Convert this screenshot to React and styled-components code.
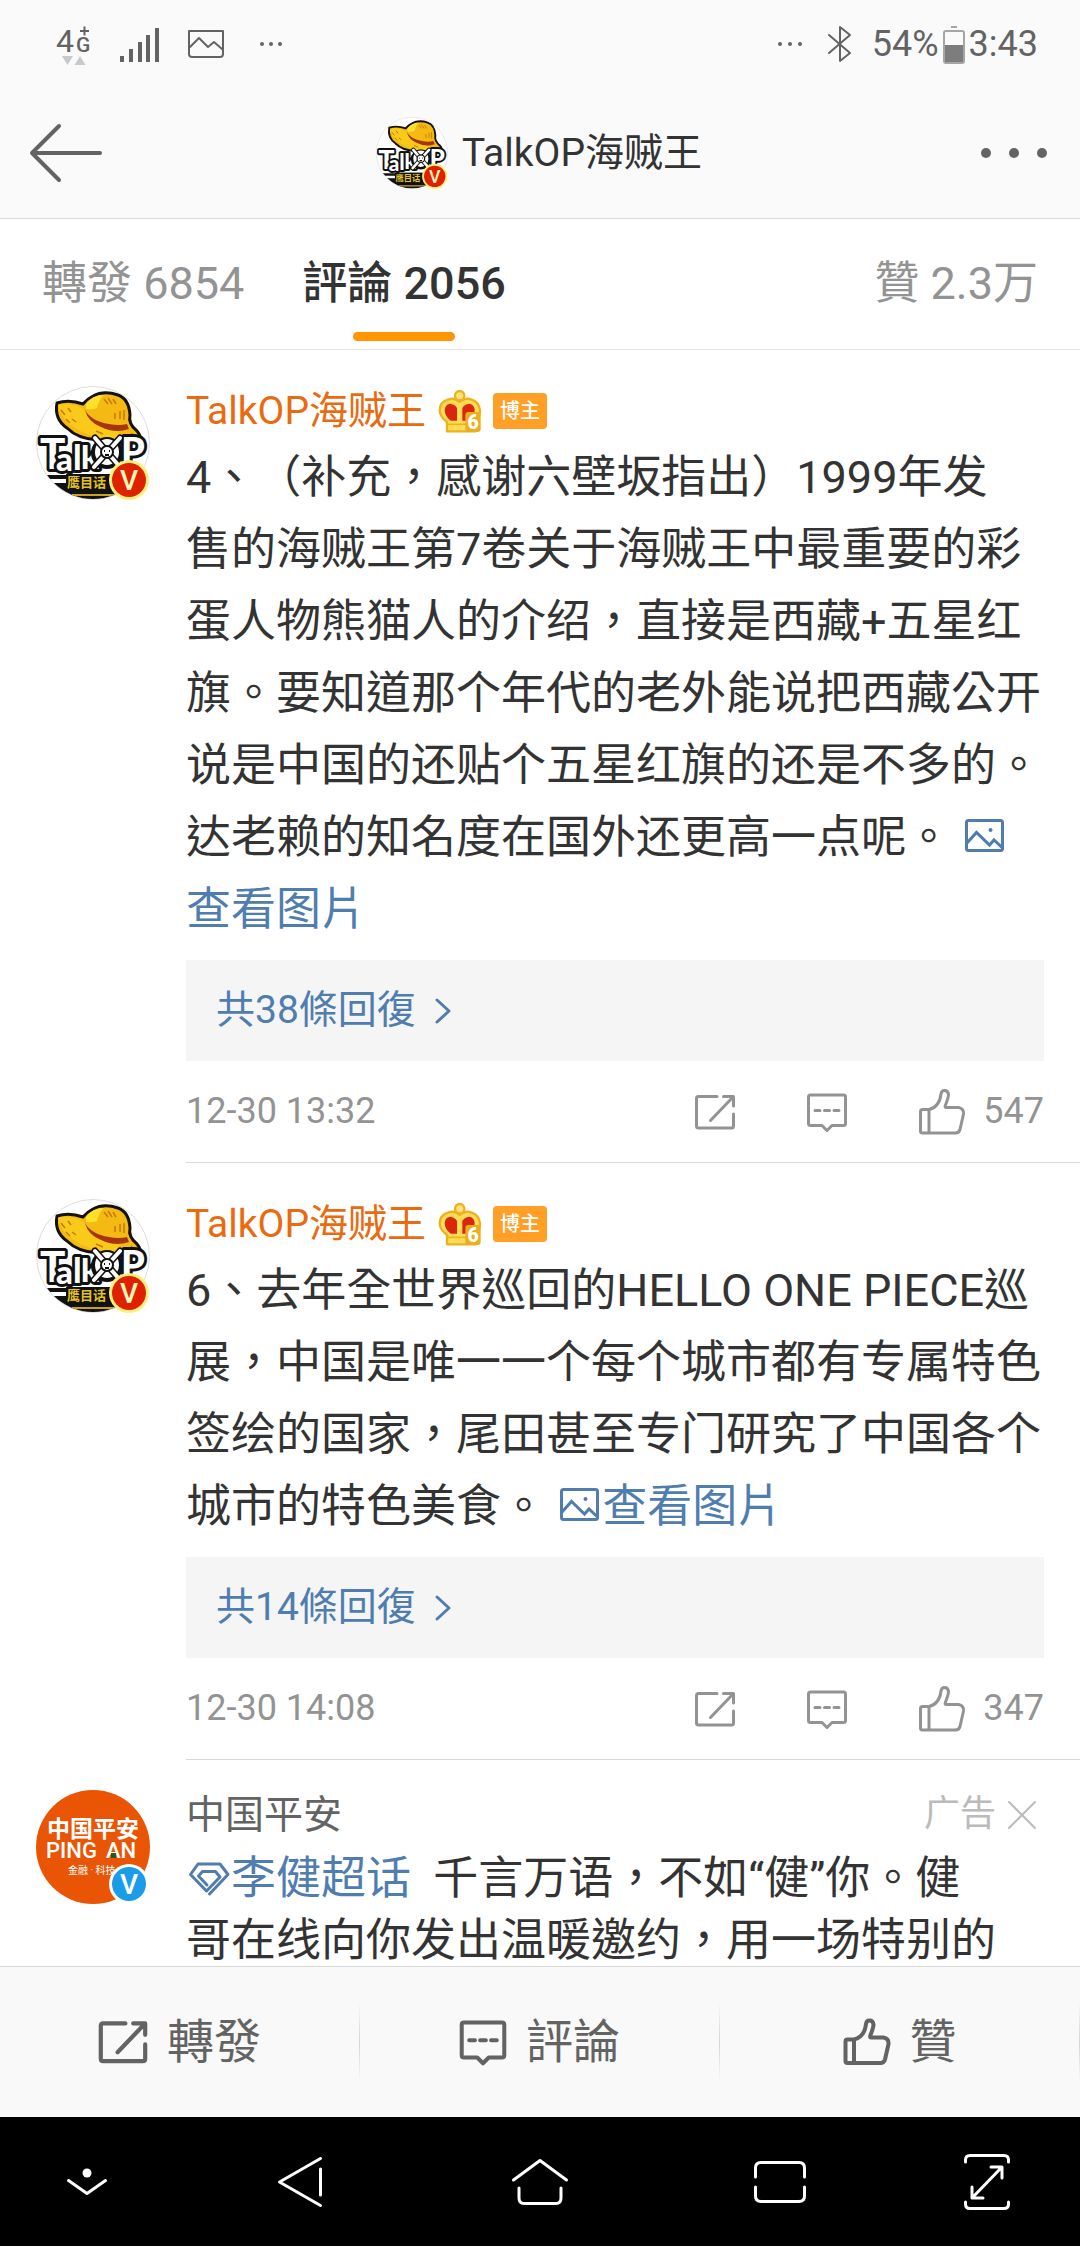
import React from "react";
import styled, { createGlobalStyle } from "styled-components";

const COLORS = {
  bar: "#fafafa",
  line: "#d9d9d9",
  text: "#333333",
  muted: "#939393",
  dark: "#636363",
  link: "#507daf",
  name: "#e86b0f",
  orange: "#ff9500",
};

const SIZES = {
  sm: "36px",
  md: "39px",
  lg: "45px",
};

const GlobalStyle = createGlobalStyle`
  * {
    box-sizing: border-box;
  }

  body {
    margin: 0;
    background: white;
    color: ${COLORS.text};
    font-family: Roboto, "Noto Sans CJK TC", sans-serif;
    line-height: 1.2;
    text-spacing-trim: space-all;
  }

  button {
    margin: 0;
    padding: 0;
    border: 0;
    background: none;
    color: inherit;
    font: inherit;
    cursor: pointer;
  }

  svg {
    display: block;
    flex: none;
    overflow: visible;
  }
`;

const Screen = styled.div`
  display: flex;
  flex-direction: column;
  height: 100vh;
`;

const StatusBar = styled.div`
  display: flex;
  justify-content: space-between;
  align-items: center;
  height: 88px;
  padding: 0 42px 0 56px;
  background: ${COLORS.bar};
  color: ${COLORS.dark};
  font-size: ${SIZES.sm};
`;

const StatusGroup = styled.div`
  display: flex;
  align-items: center;
  gap: ${(props) => props.$gap};
`;

const Power = styled.div`
  display: flex;
  align-items: center;
  gap: 4px;
  padding-top: 2px;
`;

const Header = styled.header`
  display: grid;
  grid-template-columns: 1fr auto 1fr;
  align-items: center;
  height: 131px;
  padding: 0 32px 0 30px;
  background: ${COLORS.bar};
  border-bottom: 1px solid ${COLORS.line};
  color: ${COLORS.dark};
`;

const Title = styled.h1`
  display: flex;
  align-items: center;
  gap: 14px;
  margin: 0;
  color: ${COLORS.text};
  font-size: ${SIZES.md};
  font-weight: 400;
`;

const MoreButton = styled.button`
  justify-self: end;
`;

const Tabs = styled.nav`
  display: flex;
  gap: 58px;
  height: 131px;
  padding: 0 42px;
  border-bottom: 1px solid #e6e6e6;
`;

const Tab = styled.button`
  display: flex;
  flex-direction: column;
  justify-content: center;
  align-items: center;
  position: relative;
  color: ${(props) => (props.$active ? COLORS.text : COLORS.muted)};
  font-size: ${SIZES.lg};
  font-weight: ${(props) => (props.$active ? 500 : 400)};

  &:last-child {
    margin-left: auto;
  }

  &::after {
    content: "";
    display: ${(props) => (props.$active ? "block" : "none")};
    position: absolute;
    bottom: 8px;
    width: 102px;
    height: 9px;
    border-radius: 5px;
    background: ${COLORS.orange};
  }
`;

const Feed = styled.main`
  flex: 1;
  min-height: 0;
  overflow-y: auto;
  scrollbar-width: none;
`;

const Item = styled.article`
  display: flex;
  gap: 36px;
  padding-left: 36px;
`;

const ItemAvatar = styled.div`
  flex: none;
  padding-top: ${(props) => props.$top};
`;

const ItemContent = styled.div`
  flex: 1;
  min-width: 0;
  padding: ${(props) => props.$top} 36px 0 0;
  border-bottom: 1px solid ${COLORS.line};
`;

const NameRow = styled.div`
  display: flex;
  align-items: center;
  height: 50px;
  gap: 12px;
`;

const Name = styled.a`
  color: ${(props) => (props.$plain ? COLORS.dark : COLORS.name)};
  font-size: ${SIZES.md};
  text-decoration: none;
`;

const OwnerTag = styled.span`
  height: 36px;
  padding: 0 7px;
  border-radius: 4px;
  background: #ff9f26;
  color: white;
  font-size: 20px;
  font-weight: 500;
  line-height: 36px;
`;

const Body = styled.p`
  margin: 6px 0 14px;
  font-size: ${SIZES.lg};
  line-height: 72px;
  white-space: pre-line;
`;

const AdBody = styled.p`
  margin: 8px 0 30px;
  padding-right: 44px;
  font-size: ${SIZES.lg};
  line-height: 62px;
`;

const TextLink = styled.a`
  color: ${COLORS.link};
  text-decoration: none;

  svg {
    display: inline-block;
    vertical-align: -2px;
  }
`;

const Replies = styled.button`
  display: flex;
  align-items: center;
  gap: 18px;
  width: 100%;
  height: 101px;
  padding: 0 30px;
  background: #f5f5f5;
  color: ${COLORS.link};
  font-size: ${SIZES.md};
`;

const Meta = styled.footer`
  display: flex;
  align-items: center;
  height: 101px;
  color: ${COLORS.muted};
  font-size: ${SIZES.sm};
`;

const Actions = styled.div`
  display: flex;
  align-items: center;
  gap: 72px;
  margin-left: auto;
`;

const Action = styled.button`
  display: flex;
  align-items: center;
  gap: 18px;
`;

const AdLabel = styled.div`
  display: flex;
  align-items: center;
  gap: 12px;
  margin-left: auto;
  padding-right: 8px;
  color: #bbbbbb;
  font-size: ${SIZES.sm};
`;

const Toolbar = styled.div`
  display: flex;
  flex: none;
  height: 151px;
  background: #f9f9f9;
  border-top: 1px solid ${COLORS.line};
`;

const ToolbarButton = styled.button`
  display: flex;
  flex: 1;
  justify-content: center;
  align-items: center;
  gap: 20px;
  color: ${COLORS.dark};
  font-size: 47px;
  background: linear-gradient(transparent, #d4d4d4, transparent) right center /
    1px 80px no-repeat;
`;

const SystemNav = styled.nav`
  display: grid;
  grid-template-columns: 29fr 42fr 38fr 42fr 27fr;
  flex: none;
  height: 129px;
  padding-right: 12px;
  background: black;
  color: white;
`;

const NavButton = styled.button`
  display: flex;
  justify-content: center;
  align-items: center;
`;

const stroke = (width) => ({
  fill: "none",
  stroke: "currentColor",
  strokeWidth: width,
  strokeLinecap: "round",
  strokeLinejoin: "round",
});

const ShareIcon = ({ size = 40, weight = 3 }) => (
  <svg width={size} height={size} viewBox="0 0 40 40" {...stroke(weight)}>
    <path d="M22 4.5H3.500Q1.500 4.500 1.500 6.500V34Q1.500 36 3.500 36H36.500Q38.500 36 38.500 34V22" />
    <path d="M28.500 4.500H38.500V14M38 5L15.500 28.500" />
  </svg>
);

const CommentIcon = ({ size = 40, weight = 3 }) => (
  <svg width={size} height={size} viewBox="0 0 40 40" {...stroke(weight)}>
    <path d="M3.500 3H36.500Q38.500 3 38.500 5V31.500Q38.500 33.500 36.500 33.500H25L20 38.500L15 33.500H3.500Q1.500 33.500 1.500 31.500V5Q1.500 3 3.500 3Z" />
    <path d="M8 18.500H13M17.500 18.500H22.500M27 18.500H32" />
  </svg>
);

const LikeIcon = ({ size = 46, weight = 3 }) => (
  <svg width={size} height={size} viewBox="0 0 46 46" {...stroke(weight)}>
    <path d="M10 20.500H3.500Q1.500 20.500 1.500 22.500V42Q1.500 44 3.500 44H36.500Q40 44 41 40.500L44.500 25Q45 19.500 39.500 18.500H27Q25.500 18.500 26.500 16Q29.500 8.500 29.500 5.500Q29 1.500 25.500 1.500Q22.500 1.500 22 5Q20.500 18 10 20.500V44" />
  </svg>
);

const PictureIcon = () => (
  <svg width="45" height="39" viewBox="0 0 45 39" {...stroke(3)}>
    <rect x="4.500" y="4.500" width="36" height="30" rx="2" />
    <path
      d="M5 27L14.500 16.500L27.500 29L32 24L40 31.500"
      strokeLinecap="butt"
      strokeLinejoin="miter"
    />
    <circle cx="28.500" cy="14" r="2" fill="currentColor" stroke="none" />
  </svg>
);

const TopicIcon = () => (
  <svg width="45" height="36" viewBox="0 0 45 36" {...stroke(3)}>
    <path d="M23.500 34L42 14.500L34 4H12L4.500 14.500L20.500 31L34 17L29.500 11.500H16.500L12.500 16L21 25" />
  </svg>
);

const ChevronIcon = () => (
  <svg width="18" height="26" viewBox="0 0 18 26" {...stroke(3)}>
    <path d="M3 2L15 13L3 24" />
  </svg>
);

const CloseIcon = () => (
  <svg width="28" height="28" viewBox="0 0 28 28" {...stroke(2)}>
    <path d="M1 1L27 27M27 1L1 27" />
  </svg>
);

const DotsIcon = ({ size, step, r }) => (
  <svg width={size} height={r * 2} fill="currentColor">
    <circle cx={r} cy={r} r={r} />
    <circle cx={r + step} cy={r} r={r} />
    <circle cx={r + step * 2} cy={r} r={r} />
  </svg>
);

const BackIcon = () => (
  <svg width="74" height="60" viewBox="0 0 74 60" {...stroke(4)}>
    <path d="M70 30H2M29 3L2 30L29 57" />
  </svg>
);

const NetworkIcon = () => (
  <svg width="36" height="44" viewBox="0 0 36 44" fill="currentColor">
    <text x="0" y="30" fontSize="32">
      4
    </text>
    <text x="20" y="30" fontSize="21" fontWeight="500">
      G
    </text>
    <path d="M24 9H33M28.500 4.500V13.500" stroke="currentColor" strokeWidth="2" />
    <path d="M6 34H17L11.500 43ZM18.500 43H29.500L24 34Z" fill="#c9c9c9" />
  </svg>
);

const SignalIcon = () => (
  <svg width="40" height="36" viewBox="0 0 40 36" fill="currentColor">
    <rect x="0" y="30" width="4" height="6" />
    <rect x="9" y="23" width="4" height="13" />
    <rect x="18" y="16" width="4" height="20" />
    <rect x="26" y="9" width="4" height="27" />
    <rect x="35" y="2" width="4" height="34" />
  </svg>
);

const GalleryIcon = () => (
  <svg width="36" height="28" viewBox="0 0 36 28" {...stroke(2)}>
    <path d="M1 1H35V24Q35 27 32 27H4Q1 27 1 24Z" />
    <path d="M2 17L11 8L20 17L26 12L34 19" />
  </svg>
);

const BluetoothIcon = () => (
  <svg width="24" height="38" viewBox="0 0 24 38" {...stroke(2)}>
    <path d="M1 10L22 28L12 36V2L22 10L1 28" />
  </svg>
);

const BatteryIcon = () => (
  <svg width="22" height="38" viewBox="0 0 22 38">
    <rect x="8" y="0" width="6" height="2" fill="#a5a5a5" />
    <rect
      x="1"
      y="5"
      width="20"
      height="32"
      rx="2"
      fill="none"
      stroke="#a5a5a5"
      strokeWidth="2"
    />
    <rect x="2" y="19" width="18" height="17" fill="#7d7d7d" />
  </svg>
);

const CrownIcon = () => (
  <svg width="43" height="43" viewBox="0 0 129 129">
    <g stroke="#ecb21f" strokeWidth="7" strokeLinejoin="round">
      <path
        d="M65 36Q50 22 32 28Q5 35 5 62Q7 82 27 96V124H112V96Q126 82 126 62Q124 36 99 28Q80 22 65 36Z"
        fill="#ffdc55"
      />
      <circle cx="65" cy="17" r="14" fill="#ffe27a" />
    </g>
    <path
      d="M38 92Q20 78 20 60Q21 44 36 41Q50 42 57 54V92ZM92 92Q110 78 110 60Q109 44 94 41Q80 42 73 54V92Z"
      fill="#d9260f"
    />
    <path d="M28 103H100" stroke="#ecb21f" strokeWidth="5" />
    <rect x="82" y="66" width="46" height="60" rx="9" fill="#ecae1c" />
    <text
      x="105"
      y="117"
      fontSize="58"
      fontWeight="900"
      textAnchor="middle"
      fill="white"
    >
      6
    </text>
  </svg>
);

const VerifiedMark = ({ ring, fill, color }) => (
  <g>
    <circle cx="93" cy="94" r="20" fill={ring} />
    <circle cx="93" cy="94" r="17" fill={fill} />
    <text
      x="93"
      y="104"
      fontSize="28"
      fontWeight="500"
      textAnchor="middle"
      fill={color}
    >
      V
    </text>
  </g>
);

const HatAvatar = ({ size, id }) => (
  <svg width={size} height={size} viewBox="0 0 114 114">
    <clipPath id={id}>
      <circle cx="57" cy="57" r="56" />
    </clipPath>
    <circle cx="57" cy="57" r="56.500" fill="white" stroke="#dddddd" />
    <g clipPath={`url(#${id})`}>
      <path d="M10 89H40V93H14ZM16 97H104V120H16Z" fill="#111111" />
      <rect x="30" y="88" width="70" height="18" fill="#111111" />
      <path d="M36 109H90" stroke="#c9a21d" strokeWidth="2" />
      <path
        d="M21 17Q18 33 31 42Q42 53 62 54Q76 54 87 58L104 56Q106 51 101 45Q92 38 94 29Q93 13 82 9Q68 4 57 10Q51 13 47 18Q33 13 21 17Z"
        fill="#f5b914"
        stroke="#15110b"
        strokeWidth="3"
        strokeLinejoin="round"
      />
      <path d="M50 18Q56 9 68 9Q63 13 61 22Q56 24 50 23Z" fill="#ffe02b" />
      <path
        d="M22 19Q34 16 46 22Q56 36 74 41Q84 45 88 54Q58 54 39 42Q25 34 22 19Z"
        fill="#f9ca19"
      />
      <path
        d="M49 24Q55 35 73 38Q83 40 91 38L93 43Q79 48 65 41Q52 36 49 24Z"
        fill="#a8360c"
      />
      <path
        d="M25 24L29 29M32 22L35 26M36 33L40 36M30 33L34 37M68 13L72 18M72 12L76 18M77 13L80 18M79 27V33M84 25V33M88 24V34M60 45L67 48M95 47L99 51"
        stroke="#c87a0d"
        strokeWidth="1.500"
      />
      <g
        fill="white"
        stroke="#111111"
        strokeWidth="6"
        strokeLinejoin="round"
        paintOrder="stroke"
        fontFamily="Lato, sans-serif"
        fontWeight="900"
      >
        <text x="4" y="83" fontSize="42">
          T
        </text>
        <text x="20" y="85" fontSize="33">
          a
        </text>
        <text x="37" y="84" fontSize="35">
          l
        </text>
        <text x="45" y="83" fontSize="33">
          k
        </text>
        <text x="85" y="79" fontSize="38">
          P
        </text>
      </g>
      <circle cx="71" cy="67" r="16" fill="#111111" />
      <ellipse cx="71" cy="66" rx="12" ry="13" fill="white" />
      <path
        d="M59 52L84 81M84 52L58 81"
        stroke="#111111"
        strokeWidth="7"
        strokeLinecap="round"
      />
      <path
        d="M59 52L84 81M84 52L58 81"
        stroke="white"
        strokeWidth="4"
        strokeLinecap="round"
      />
      <circle cx="71" cy="66" r="6" fill="white" stroke="#111111" strokeWidth="2" />
      <path d="M68 65H69M73 65H74M69 69H73" stroke="#111111" strokeWidth="2" />
      <text x="31" y="101" fontSize="13" fontWeight="700" fill="#e4c21f">
        鹰目话
      </text>
    </g>
    <VerifiedMark ring="#fdf07c" fill="#df2100" color="#fff7b8" />
  </svg>
);

const BankAvatar = () => (
  <svg width="114" height="114" viewBox="0 0 114 114">
    <circle cx="57" cy="57" r="57" fill="#e95504" />
    <g fill="white">
      <text x="11" y="47" fontSize="23" fontWeight="700">
        中国平安
      </text>
      <text x="10" y="68" fontSize="22" fontWeight="500">
        PING
      </text>
      <text x="70" y="68" fontSize="22" fontWeight="500">
        AN
      </text>
      <text x="32" y="84" fontSize="10">
        金融 · 科技
      </text>
    </g>
    <rect x="75" y="63" width="5" height="5" fill="#1d5c22" />
    <VerifiedMark ring="white" fill="#1b9ce9" color="white" />
  </svg>
);

const comments = [
  {
    id: "c4",
    text: "4、（补充，感谢六壁坂指出）1999年发\n售的海贼王第7卷关于海贼王中最重要的彩蛋人物熊猫人的介绍，直接是西藏+五星红旗。要知道那个年代的老外能说把西藏公开说是中国的还贴个五星红旗的还是不多的。达老赖的知名度在国外还更高一点呢。 ",
    replies: 38,
    time: "12-30 13:32",
    likes: 547,
  },
  {
    id: "c6",
    text: "6、去年全世界巡回的HELLO ONE PIECE巡展，中国是唯一一个每个城市都有专属特色签绘的国家，尾田甚至专门研究了中国各个城市的特色美食。 ",
    replies: 14,
    time: "12-30 14:08",
    likes: 347,
  },
];

const Comment = ({ id, text, replies, time, likes }) => (
  <Item>
    <ItemAvatar $top="36px">
      <HatAvatar size={114} id={id} />
    </ItemAvatar>
    <ItemContent $top="36px">
      <NameRow>
        <Name href="#user">TalkOP海贼王</Name>
        <CrownIcon />
        <OwnerTag>博主</OwnerTag>
      </NameRow>
      <Body>
        {text}
        <TextLink href="#picture">
          <PictureIcon />
          查看图片
        </TextLink>
      </Body>
      <Replies>
        共{replies}條回復
        <ChevronIcon />
      </Replies>
      <Meta>
        <time>{time}</time>
        <Actions>
          <Action aria-label="轉發">
            <ShareIcon />
          </Action>
          <Action aria-label="評論">
            <CommentIcon />
          </Action>
          <Action>
            <LikeIcon />
            {likes}
          </Action>
        </Actions>
      </Meta>
    </ItemContent>
  </Item>
);

const App = () => {
  return (
    <>
      <GlobalStyle />
      <Screen>
        <StatusBar>
          <StatusGroup $gap="36px">
            <StatusGroup $gap="28px">
              <NetworkIcon />
              <SignalIcon />
              <GalleryIcon />
            </StatusGroup>
            <DotsIcon size={24} step={9} r={2} />
          </StatusGroup>
          <StatusGroup $gap="20px">
            <StatusGroup $gap="26px">
              <DotsIcon size={24} step={10} r={2} />
              <BluetoothIcon />
            </StatusGroup>
            <Power>
              <span>54%</span>
              <BatteryIcon />
              <span>3:43</span>
            </Power>
          </StatusGroup>
        </StatusBar>

        <Header>
          <button aria-label="返回">
            <BackIcon />
          </button>
          <Title>
            <HatAvatar size={72} id="header" />
            TalkOP海贼王
          </Title>
          <MoreButton aria-label="更多">
            <DotsIcon size={67} step={28} r={5} />
          </MoreButton>
        </Header>

        <Tabs>
          <Tab>轉發 6854</Tab>
          <Tab $active>評論 2056</Tab>
          <Tab>贊 2.3万</Tab>
        </Tabs>

        <Feed>
          {comments.map((comment) => (
            <Comment key={comment.id} {...comment} />
          ))}
          <Item>
            <ItemAvatar $top="30px">
              <BankAvatar />
            </ItemAvatar>
            <ItemContent $top="30px">
              <NameRow>
                <Name href="#user" $plain>
                  中国平安
                </Name>
                <AdLabel>
                  广告
                  <button aria-label="關閉廣告">
                    <CloseIcon />
                  </button>
                </AdLabel>
              </NameRow>
              <AdBody>
                <TextLink href="#topic">
                  <TopicIcon />
                  李健超话
                </TextLink>
                {"\u00a0 "}千言万语，不如“健”你。健哥在线向你发出温暖邀约，用一场特别的
              </AdBody>
            </ItemContent>
          </Item>
        </Feed>

        <Toolbar>
          <ToolbarButton>
            <ShareIcon size={48} weight={3.5} />
            轉發
          </ToolbarButton>
          <ToolbarButton>
            <CommentIcon size={46} weight={3.5} />
            評論
          </ToolbarButton>
          <ToolbarButton>
            <LikeIcon size={46} weight={4} />
            贊
          </ToolbarButton>
        </Toolbar>

        <SystemNav>
          <NavButton aria-label="隱藏">
            <svg width="40" height="26" viewBox="0 0 40 26" {...stroke(3)}>
              <circle cx="20" cy="4" r="4.500" fill="white" stroke="none" />
              <path d="M1.500 11.500L20 24.500L38.500 11.500" />
            </svg>
          </NavButton>
          <NavButton aria-label="上一頁">
            <svg width="44" height="50" viewBox="0 0 44 50" {...stroke(3)}>
              <path d="M42.500 1.500L1.500 25L42.500 48.500M42.500 12V38" />
            </svg>
          </NavButton>
          <NavButton aria-label="主頁">
            <svg width="56" height="46" viewBox="0 0 56 46" {...stroke(3)}>
              <path d="M1.500 21L28 1.500L54.500 21M7 29V39Q7 44.500 12 44.500H44Q49 44.500 49 39V29" />
            </svg>
          </NavButton>
          <NavButton aria-label="最近">
            <svg width="52" height="42" viewBox="0 0 52 42" {...stroke(3)}>
              <path d="M1.500 16V7Q1.500 1.500 7 1.500H45Q50.500 1.500 50.500 7V16M1.500 26V35Q1.500 40.500 7 40.500H45Q50.500 40.500 50.500 35V26" />
            </svg>
          </NavButton>
          <NavButton aria-label="全螢幕">
            <svg width="46" height="56" viewBox="0 0 46 56" {...stroke(3)}>
              <path d="M1.500 8V6Q1.500 1.500 6 1.500H40Q44.500 1.500 44.500 6V8M1.500 48V50Q1.500 54.500 6 54.500H40Q44.500 54.500 44.500 50V48" />
              <path d="M9 43L37 14M27 13H38V24M8 33V44H19" />
            </svg>
          </NavButton>
        </SystemNav>
      </Screen>
    </>
  );
};

export default App;
